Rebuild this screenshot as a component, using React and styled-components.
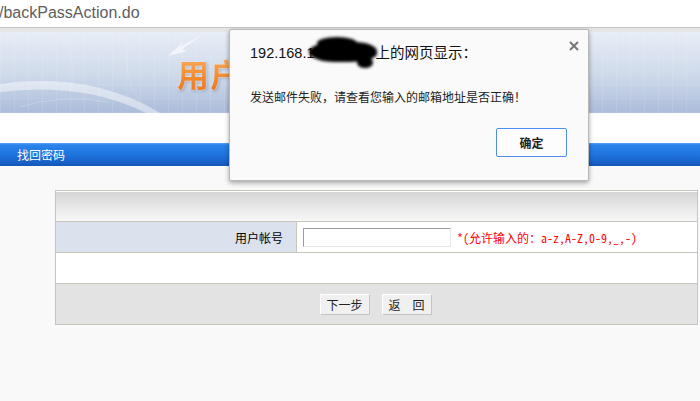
import React from "react"
import styled, { createGlobalStyle } from "styled-components"

const Global = createGlobalStyle`
  html, body {
    margin: 0;
    padding: 0;
    background: #f9f9f9;
  }
  * {
    box-sizing: border-box;
  }
`

const Page = styled.div`
  position: relative;
  width: 700px;
  height: 401px;
  overflow: hidden;
  background: #f9f9f9;
  font-family: "Noto Sans CJK SC", "Liberation Sans", sans-serif;
`

const AddressBar = styled.div`
  height: 28px;
  display: flex;
  align-items: center;
  background: #fff;
  border-bottom: 1px solid #c6c6c6;
  font-family: "Liberation Sans", Arial, sans-serif;
  font-size: 16px;
  color: #5e5e5e;
`

const Url = styled.span`
  margin-left: -1px;
  margin-top: -1px;
`

const Strip = styled.div`
  height: 4px;
  background: #e6e6e6;
`

const Banner = styled.div`
  position: relative;
  height: 81px;
  display: flex;
  align-items: center;
  padding-left: 177px;
  overflow: hidden;
  background:
    repeating-linear-gradient(90deg, rgba(255,255,255,0.1) 0 1px, transparent 1px 14px),
    repeating-linear-gradient(0deg, rgba(255,255,255,0.08) 0 1px, transparent 1px 14px),
    linear-gradient(#e8eef6, #cdd8ea 55%, #abbcda);
`

const BannerArt = styled.svg`
  position: absolute;
  inset: 0;
  width: 100%;
  height: 100%;
`

const BannerTitle = styled.span`
  position: relative;
  font-size: 32px;
  font-weight: 700;
  letter-spacing: 1px;
  background: linear-gradient(#fcb76c, #f28a2e 60%, #ea7420);
  -webkit-background-clip: text;
  background-clip: text;
  color: transparent;
  filter: drop-shadow(0 0 1px #fff) drop-shadow(1px 1px 1px rgba(60, 70, 100, 0.35));
`

const WhiteGap = styled.div`
  height: 30px;
  background: #fff;
`

const SectionBar = styled.div`
  height: 23px;
  display: flex;
  align-items: center;
  padding-left: 17px;
  color: #fff;
  font-size: 12px;
  background: linear-gradient(#5aa2f0 0, #2a83ea 2px, #1f74de 50%, #1a66cf 75%, #1556b8);
`

const Content = styled.div`
  padding: 24px 2px 0 55px;
`

const FormBox = styled.div`
  width: 643px;
  border: 1px solid #c8c5bd;
  background: #fff;
`

const HeadRow = styled.div`
  height: 31px;
  border-top: 1px solid #fff;
  border-bottom: 1px solid #c8c5bd;
  background: linear-gradient(#d5d5d5, #e9e9e9 55%, #f7f7f7);
`

const FieldRow = styled.div`
  display: grid;
  grid-template-columns: 241px 1fr;
  height: 31px;
  border-bottom: 1px solid #c8c5bd;
`

const LabelCell = styled.div`
  display: flex;
  align-items: center;
  justify-content: flex-end;
  padding-right: 13px;
  background: #dbe1ed;
  border-right: 1px solid #c8c5bd;
  font-size: 12px;
  color: #000;
`

const ValueCell = styled.div`
  display: flex;
  align-items: center;
  gap: 6px;
  padding-left: 6px;
`

const TextInput = styled.input`
  width: 148px;
  height: 19px;
  margin: 0;
  padding: 0 2px;
  border: 1px solid;
  border-color: #9c9c9c #e6e6e6 #e6e6e6 #9c9c9c;
  background: #fff;
  outline: none;
`

const Hint = styled.span`
  font-family: "Noto Sans Mono CJK SC", "Noto Sans CJK SC", monospace;
  font-size: 12px;
  color: #ff0000;
  white-space: nowrap;
`

const BlankRow = styled.div`
  height: 31px;
  border-bottom: 1px solid #c8c5bd;
`

const ActionRow = styled.div`
  height: 40px;
  display: flex;
  justify-content: center;
  align-items: center;
  gap: 12px;
  padding-right: 2px;
  background: #e2e3e2;
`

const PlainButton = styled.button`
  width: 50px;
  height: 21px;
  padding: 0;
  font-family: "Noto Sans CJK SC", sans-serif;
  font-size: 12px;
  color: #222;
  background: #f0f0f0;
  border: 1px solid;
  border-color: #fff #c4c4c4 #c4c4c4 #fff;
`

const Dialog = styled.div`
  position: absolute;
  left: 229px;
  top: 29px;
  width: 360px;
  height: 152px;
  padding: 12px 21px 0 20px;
  display: flex;
  flex-direction: column;
  background: #fafafa;
  border: 1px solid #b8b8b8;
  border-radius: 2px;
  box-shadow: 0 2px 5px rgba(0, 0, 0, 0.35);
`

const DialogTitle = styled.div`
  font-family: "Liberation Sans", "Noto Sans CJK SC", sans-serif;
  font-size: 14.5px;
  line-height: 20px;
  color: #111;
  white-space: nowrap;
`

const Redact = styled.span`
  position: relative;
  display: inline-block;
  width: 68px;
  height: 20px;
  margin-left: -6px;
  margin-right: -1px;
  vertical-align: -4px;
  background: #000;
  border-radius: 45% 40% 50% 45% / 60% 55% 50% 60%;
  filter: blur(1.5px);

  &::before {
    content: "";
    position: absolute;
    left: 8px;
    top: -5px;
    width: 40px;
    height: 12px;
    border-radius: 50%;
    background: #000;
  }
  &::after {
    content: "";
    position: absolute;
    right: 4px;
    bottom: -6px;
    width: 16px;
    height: 11px;
    border-radius: 50%;
    background: #000;
  }
`

const CloseMark = styled.svg`
  position: absolute;
  right: 9px;
  top: 11px;
`

const Message = styled.div`
  margin-top: 26px;
  font-size: 12px;
  line-height: 16px;
  color: #222;
`

const Footer = styled.div`
  margin-top: 23px;
  display: flex;
  justify-content: flex-end;
`

const OkButton = styled.button`
  width: 71px;
  height: 29px;
  padding: 0;
  font-family: "Noto Sans CJK SC", sans-serif;
  font-size: 12px;
  font-weight: 700;
  color: #222;
  background: #fdfdfd;
  border: 1px solid #4d8ef0;
  border-radius: 2px;
`

const App = () => (
  <Page>
    <Global />
    <AddressBar>
      <Url>/backPassAction.do</Url>
    </AddressBar>
    <Strip />
    <Banner>
      <BannerArt viewBox="0 0 700 81" preserveAspectRatio="none">
        <path
          d="M0 52 Q 50 44 100 56 Q 135 65 160 81 L 146 81 Q 120 68 90 62 Q 45 54 0 60 Z"
          fill="rgba(255,255,255,0.45)"
        />
        <path
          d="M20 75 Q 60 62 110 70"
          stroke="rgba(255,255,255,0.2)"
          strokeWidth="1"
          fill="none"
        />
        <path
          d="M204 2 L180 15 L183 10 L168 24 L187 19 L182 17 Z"
          fill="rgba(255,255,255,0.6)"
        />
        <path
          d="M60 5 Q 80 30 70 60 M130 10 Q 120 40 140 70"
          stroke="rgba(255,255,255,0.15)"
          strokeWidth="1"
          fill="none"
        />
      </BannerArt>
      <BannerTitle>用户</BannerTitle>
    </Banner>
    <WhiteGap />
    <SectionBar>找回密码</SectionBar>
    <Content>
      <FormBox>
        <HeadRow />
        <FieldRow>
          <LabelCell>用户帐号</LabelCell>
          <ValueCell>
            <TextInput type="text" />
            <Hint>*(允许输入的：a-z,A-Z,0-9,_,-)</Hint>
          </ValueCell>
        </FieldRow>
        <BlankRow />
        <ActionRow>
          <PlainButton>下一步</PlainButton>
          <PlainButton>返　回</PlainButton>
        </ActionRow>
      </FormBox>
    </Content>

    <Dialog>
      <CloseMark width="10" height="10" viewBox="0 0 10 10">
        <path d="M1 1 L9 9 M9 1 L1 9" stroke="#777" strokeWidth="2" />
      </CloseMark>
      <DialogTitle>
        192.168.1<Redact />上的网页显示：
      </DialogTitle>
      <Message>发送邮件失败，请查看您输入的邮箱地址是否正确！</Message>
      <Footer>
        <OkButton>确定</OkButton>
      </Footer>
    </Dialog>
  </Page>
)

export default App
